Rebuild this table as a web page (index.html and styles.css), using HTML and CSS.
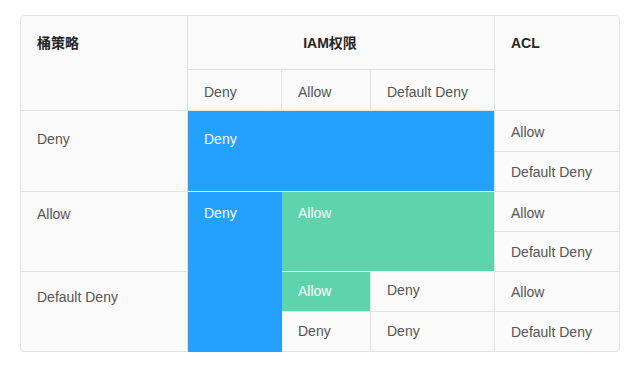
FILE: index.html
```html
<!DOCTYPE html>
<html lang="zh">
<head>
<meta charset="utf-8">
<link rel="stylesheet" href="styles.css">
</head>
<body>
<div class="page">
  <div class="matrix">
    <div class="cell head c1 r1-2 bl">桶策略</div>
    <div class="cell head iam">IAM权限</div>
    <div class="cell head acl r1-2 last-col">ACL</div>
    <div class="cell sub">Deny</div>
    <div class="cell sub">Allow</div>
    <div class="cell sub">Default Deny</div>

    <div class="cell label g1 bl">Deny</div>
    <div class="cell blue wide g1 p17">Deny</div>
    <div class="cell acl-cell last-col p10">Allow</div>
    <div class="cell acl-cell last-col p9">Default Deny</div>

    <div class="cell label g2 bl">Allow</div>
    <div class="cell blue tall p10">Deny</div>
    <div class="cell green wide2 g2 p10">Allow</div>
    <div class="cell acl-cell last-col p10">Allow</div>
    <div class="cell acl-cell last-col p9">Default Deny</div>

    <div class="cell label g3 last-row bl p14">Default Deny</div>
    <div class="cell green p8">Allow</div>
    <div class="cell p7">Deny</div>
    <div class="cell acl-cell last-col p9">Allow</div>
    <div class="cell last-row p8 c3">Deny</div>
    <div class="cell last-row p8">Deny</div>
    <div class="cell acl-cell last-col last-row p9">Default Deny</div>
  </div>
</div>
</body>
</html>
```
FILE: styles.css
```css
* { box-sizing: border-box; }
html, body { margin: 0; padding: 0; background: #ffffff; }
body {
  font-family: "Liberation Sans", "Noto Sans CJK SC", sans-serif;
  font-size: 14px;
  line-height: 22px;
  color: #555555;
}
.page { padding: 15px 0 0 20px; }
.matrix {
  width: 600px;
  height: 337px;
  border: 1px solid #e2e2e2;
  border-radius: 4px;
  background: #fafafa;
  display: grid;
  grid-template-columns: 167px 94px 89px 124px 124px;
  grid-template-rows: 54px 41px 41px 40px 40px 40px 40px 39px;
}
.cell {
  border-right: 1px solid #e2e2e2;
  border-bottom: 1px solid #e2e2e2;
  padding: 0 16px;
  white-space: nowrap;
}
.last-col { border-right: none; }
.last-row { border-bottom: none; }
.head { color: #262626; font-weight: bold; padding-top: 16px; }
.c1 { grid-column: 1; }
.r1-2 { grid-row: 1 / 3; }
.iam { grid-column: 2 / 5; grid-row: 1; text-align: center; padding-right: 38px; }
.acl { grid-column: 5; }
.sub { padding-top: 11px; }
.label { grid-column: 1; }
.g1 { grid-row: 3 / 5; padding-top: 17px; }
.g2 { grid-row: 5 / 7; padding-top: 11px; }
.g3 { grid-row: 7 / 9; }
.acl-cell { grid-column: 5; }
.blue { background: #24a0ff; color: #ffffff; }
.green { background: #5dd4ab; color: #ffffff; }
.wide { grid-column: 2 / 5; border-bottom-color: #e9eef2; }
.tall {
  grid-column: 2;
  grid-row: 5 / 9;
  border: none;
  margin-bottom: -1px;
}
.wide2 { grid-column: 3 / 5; border-bottom-color: #eef2f0; }
.c3 { grid-column: 3; }
.p7 { padding-top: 7px; }
.p8 { padding-top: 8px; }
.p9 { padding-top: 9px; }
.p10 { padding-top: 10px; }
.p14 { padding-top: 14px; }
.p17 { padding-top: 17px; }
```
